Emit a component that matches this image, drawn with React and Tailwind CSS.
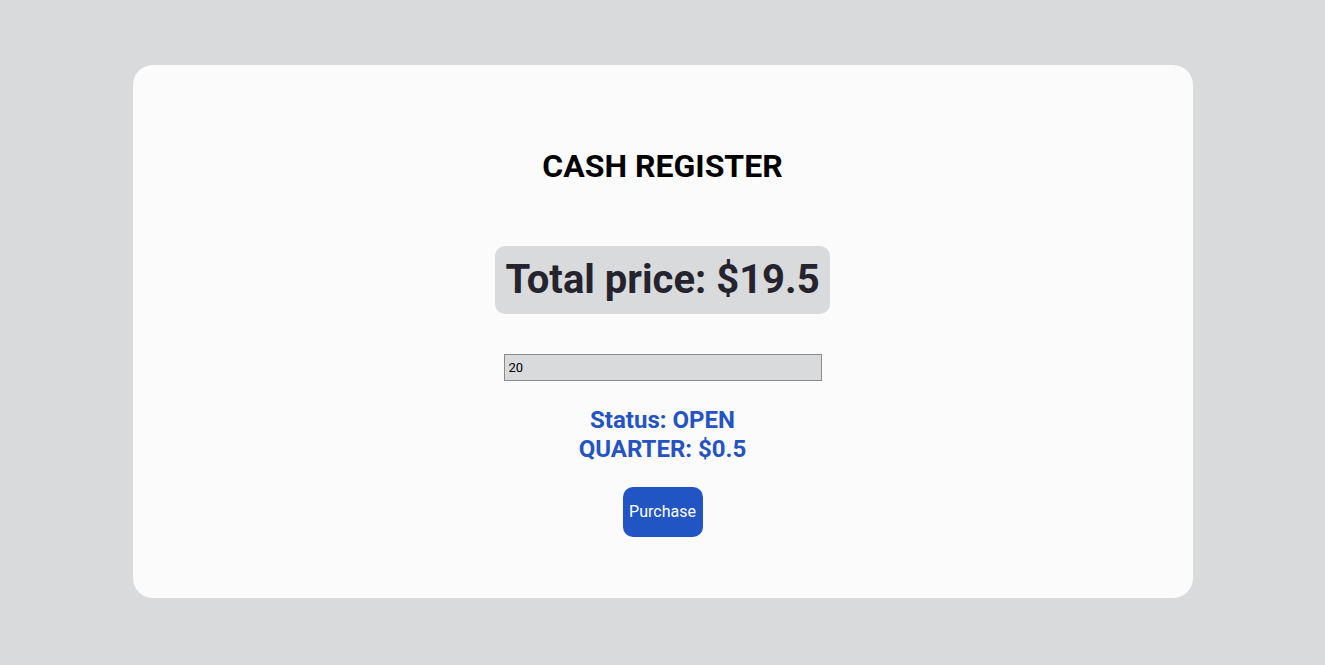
import { useState } from "react";

function App() {
    const [cash, setCash] = useState("20");

    return (
        <div className="min-h-screen bg-[#d9dadc] pt-[65px] font-['Roboto',sans-serif]">
            <div className="mx-auto flex w-[1060px] h-[533px] flex-col items-center rounded-[20px] bg-[#fbfbfb] pt-[82px]">
                <h1 className="text-[32px] leading-[38px] font-bold text-black">CASH REGISTER</h1>

                <div className="mt-[61px] rounded-[10px] bg-[#d9dadc] px-[10px] py-[10px]">
                    <p className="text-[40px] leading-[48px] font-bold text-[#25242e]">Total price: $19.5</p>
                </div>

                <input
                    type="number"
                    value={cash}
                    onChange={(e) => setCash(e.target.value)}
                    className="mt-[40px] h-[27px] w-[318px] border border-[#8b8b8b] bg-[#d9dadc] px-[4px] text-[13px] text-black outline-none font-['Roboto',sans-serif] [appearance:textfield] [&::-webkit-inner-spin-button]:appearance-none"
                />

                <div className="mt-[25px] text-center text-[24px] leading-[29px] font-bold text-[#2453c4]">
                    <p>Status: OPEN</p>
                    <p>QUARTER: $0.5</p>
                </div>

                <button className="mt-[23px] h-[50px] w-[80px] rounded-[10px] bg-[#2255c4] text-[16px] text-white">
                    Purchase
                </button>
            </div>
        </div>
    )
}

export default App
